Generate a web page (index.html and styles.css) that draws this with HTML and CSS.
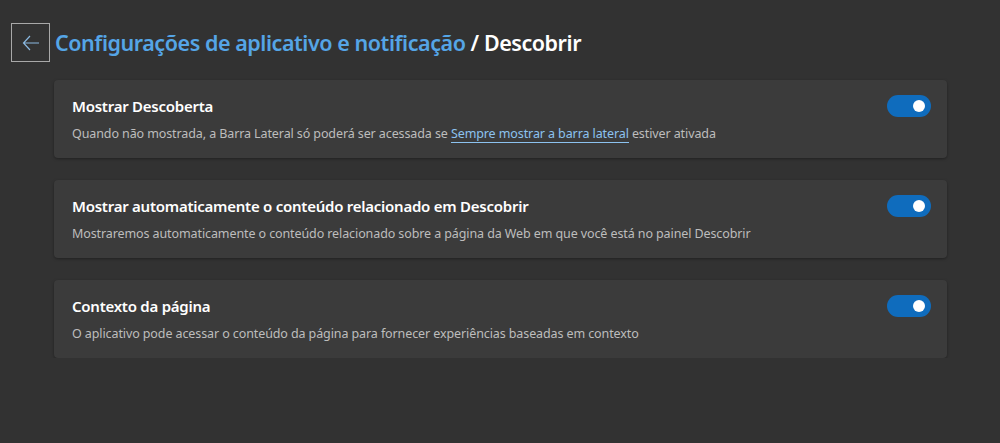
FILE: index.html
```html
<!DOCTYPE html>
<html lang="pt-BR">
<head>
    <meta charset="UTF-8">
    <meta name="viewport" content="width=device-width, initial-scale=1.0">
    <title>Descobrir</title>
    <link rel="stylesheet" href="styles.css">
</head>
<body>
    <div class="header">
        <button class="back-button" aria-label="Voltar">
            <svg width="18" height="16" viewBox="0 0 18 16">
                <path d="M17 8H1.5M8 1L1.5 8L8 15" fill="none" stroke="#8ab8e0" stroke-width="1.2"/>
            </svg>
        </button>
        <h1 class="page-title">
            <span class="crumb">Configurações de aplicativo e notificação</span>
            <span class="current">/ Descobrir</span>
        </h1>
    </div>

    <div class="settings-list">
        <div class="setting-card">
            <div class="setting-text">
                <div class="setting-title">Mostrar Descoberta</div>
                <div class="setting-desc">Quando não mostrada, a Barra Lateral só poderá ser acessada se <a href="#" class="setting-link">Sempre mostrar a barra lateral</a> estiver ativada</div>
            </div>
            <div class="toggle on"><span class="knob"></span></div>
        </div>

        <div class="setting-card">
            <div class="setting-text">
                <div class="setting-title">Mostrar automaticamente o conteúdo relacionado em Descobrir</div>
                <div class="setting-desc">Mostraremos automaticamente o conteúdo relacionado sobre a página da Web em que você está no painel Descobrir</div>
            </div>
            <div class="toggle on"><span class="knob"></span></div>
        </div>

        <div class="setting-card">
            <div class="setting-text">
                <div class="setting-title">Contexto da página</div>
                <div class="setting-desc">O aplicativo pode acessar o conteúdo da página para fornecer experiências baseadas em contexto</div>
            </div>
            <div class="toggle on"><span class="knob"></span></div>
        </div>
    </div>
</body>
</html>
```

FILE: styles.css
```css
body {
    font-family: 'Noto Sans', 'Open Sans', Arial, sans-serif;
    margin: 0;
    padding: 0;
    background-color: #323232;
    color: #ffffff;
}

.header {
    display: flex;
    align-items: center;
    gap: 5px;
    padding: 23px 0 0 11px;
    height: 39px;
}

.back-button {
    width: 39px;
    height: 39px;
    box-sizing: border-box;
    border: 1px solid #a8a8a8;
    background: transparent;
    display: flex;
    align-items: center;
    justify-content: center;
    padding: 0;
    cursor: pointer;
}

.page-title {
    margin: 0;
    font-size: 21.5px;
    font-weight: 600;
    line-height: 30px;
    letter-spacing: -0.45px;
}

.crumb {
    color: #55a5e6;
}

.current {
    color: #ffffff;
}

.settings-list {
    display: flex;
    flex-direction: column;
    gap: 22px;
    padding: 18px 53px 0 54px;
}

.setting-card {
    background-color: #3b3b3b;
    border-radius: 4px;
    box-shadow: 0 1px 3px rgba(0,0,0,0.35);
    height: 78px;
    box-sizing: border-box;
    display: flex;
    align-items: flex-start;
    justify-content: space-between;
    padding: 15px 16px 0 18px;
}

.setting-title {
    font-size: 15px;
    font-weight: 600;
    line-height: 20px;
    color: #ffffff;
    letter-spacing: -0.25px;
    margin-top: 1px;
}

.setting-desc {
    font-size: 12.5px;
    line-height: 18px;
    margin-top: 9px;
    color: #bdbdbd;
    letter-spacing: -0.1px;
}

.setting-link {
    color: #8cc2ef;
    text-decoration: none;
    border-bottom: 1px solid #8cc2ef;
}

.toggle {
    width: 44px;
    height: 22px;
    border-radius: 11px;
    background-color: #0f6cbd;
    position: relative;
    flex-shrink: 0;
}

.toggle .knob {
    position: absolute;
    right: 6px;
    top: 5px;
    width: 12px;
    height: 12px;
    border-radius: 50%;
    background-color: #ffffff;
}
```
